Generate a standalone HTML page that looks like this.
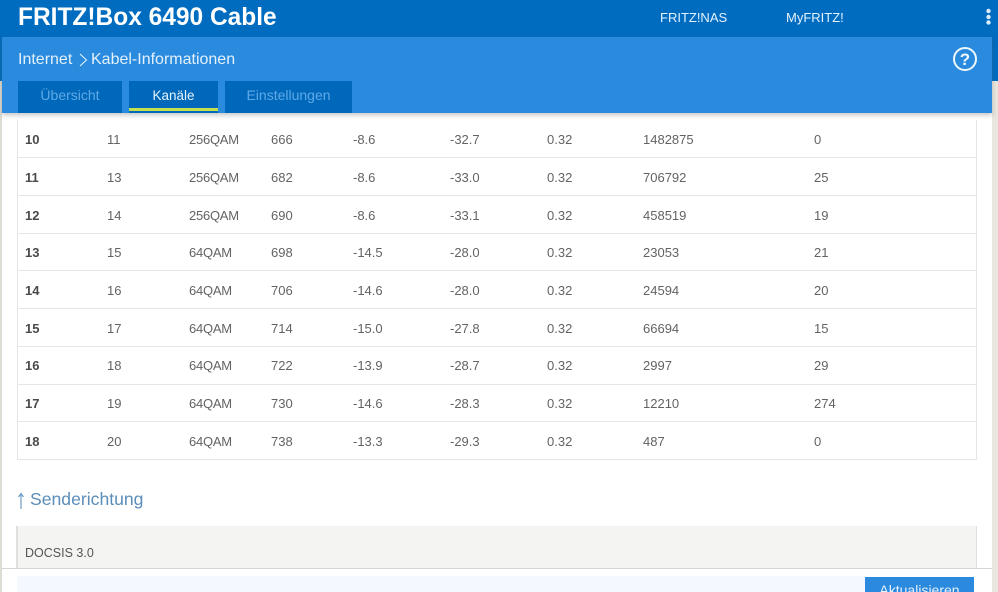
<!DOCTYPE html>
<html><head><meta charset="utf-8">
<style>
html,body{margin:0;padding:0}
body{width:998px;height:592px;position:relative;overflow:hidden;background:#fff;font-family:"Liberation Sans",sans-serif;color:#555}
.a{position:absolute;white-space:nowrap}
.c{font-size:13px;line-height:16px;color:#636363}
.q{letter-spacing:-.25px}
.b{font-weight:bold;color:#4a4a4a}
.l{position:absolute;left:17px;width:960px;height:1px;background:#e6e6e6}
</style></head><body>
<div class="a" style="left:0;top:81px;width:2px;height:511px;background:#dcdcd2"></div>
<div class="a" style="left:992px;top:81px;width:6px;height:511px;background:#e8e6df"></div>

<div class="a" style="left:17px;top:120px;width:1px;height:340px;background:#e6e6e6"></div>
<div class="a" style="left:976px;top:120px;width:1px;height:340px;background:#e6e6e6"></div>
<div class="l" style="top:157px"></div>
<div class="l" style="top:195px"></div>
<div class="l" style="top:233px"></div>
<div class="l" style="top:270px"></div>
<div class="l" style="top:308px"></div>
<div class="l" style="top:346px"></div>
<div class="l" style="top:384px"></div>
<div class="l" style="top:421px"></div>
<div class="l" style="top:459px"></div>

<div class="a c b" style="left:25px;top:132px">10</div><div class="a c" style="left:107px;top:132px">11</div><div class="a c q" style="left:189px;top:132px">256QAM</div><div class="a c" style="left:271px;top:132px">666</div><div class="a c" style="left:353px;top:132px">-8.6</div><div class="a c" style="left:450px;top:132px">-32.7</div><div class="a c" style="left:547px;top:132px">0.32</div><div class="a c" style="left:643px;top:132px">1482875</div><div class="a c" style="left:814px;top:132px">0</div>
<div class="a c b" style="left:25px;top:170px">11</div><div class="a c" style="left:107px;top:170px">13</div><div class="a c q" style="left:189px;top:170px">256QAM</div><div class="a c" style="left:271px;top:170px">682</div><div class="a c" style="left:353px;top:170px">-8.6</div><div class="a c" style="left:450px;top:170px">-33.0</div><div class="a c" style="left:547px;top:170px">0.32</div><div class="a c" style="left:643px;top:170px">706792</div><div class="a c" style="left:814px;top:170px">25</div>
<div class="a c b" style="left:25px;top:208px">12</div><div class="a c" style="left:107px;top:208px">14</div><div class="a c q" style="left:189px;top:208px">256QAM</div><div class="a c" style="left:271px;top:208px">690</div><div class="a c" style="left:353px;top:208px">-8.6</div><div class="a c" style="left:450px;top:208px">-33.1</div><div class="a c" style="left:547px;top:208px">0.32</div><div class="a c" style="left:643px;top:208px">458519</div><div class="a c" style="left:814px;top:208px">19</div>
<div class="a c b" style="left:25px;top:245px">13</div><div class="a c" style="left:107px;top:245px">15</div><div class="a c q" style="left:189px;top:245px">64QAM</div><div class="a c" style="left:271px;top:245px">698</div><div class="a c" style="left:353px;top:245px">-14.5</div><div class="a c" style="left:450px;top:245px">-28.0</div><div class="a c" style="left:547px;top:245px">0.32</div><div class="a c" style="left:643px;top:245px">23053</div><div class="a c" style="left:814px;top:245px">21</div>
<div class="a c b" style="left:25px;top:283px">14</div><div class="a c" style="left:107px;top:283px">16</div><div class="a c q" style="left:189px;top:283px">64QAM</div><div class="a c" style="left:271px;top:283px">706</div><div class="a c" style="left:353px;top:283px">-14.6</div><div class="a c" style="left:450px;top:283px">-28.0</div><div class="a c" style="left:547px;top:283px">0.32</div><div class="a c" style="left:643px;top:283px">24594</div><div class="a c" style="left:814px;top:283px">20</div>
<div class="a c b" style="left:25px;top:321px">15</div><div class="a c" style="left:107px;top:321px">17</div><div class="a c q" style="left:189px;top:321px">64QAM</div><div class="a c" style="left:271px;top:321px">714</div><div class="a c" style="left:353px;top:321px">-15.0</div><div class="a c" style="left:450px;top:321px">-27.8</div><div class="a c" style="left:547px;top:321px">0.32</div><div class="a c" style="left:643px;top:321px">66694</div><div class="a c" style="left:814px;top:321px">15</div>
<div class="a c b" style="left:25px;top:358px">16</div><div class="a c" style="left:107px;top:358px">18</div><div class="a c q" style="left:189px;top:358px">64QAM</div><div class="a c" style="left:271px;top:358px">722</div><div class="a c" style="left:353px;top:358px">-13.9</div><div class="a c" style="left:450px;top:358px">-28.7</div><div class="a c" style="left:547px;top:358px">0.32</div><div class="a c" style="left:643px;top:358px">2997</div><div class="a c" style="left:814px;top:358px">29</div>
<div class="a c b" style="left:25px;top:396px">17</div><div class="a c" style="left:107px;top:396px">19</div><div class="a c q" style="left:189px;top:396px">64QAM</div><div class="a c" style="left:271px;top:396px">730</div><div class="a c" style="left:353px;top:396px">-14.6</div><div class="a c" style="left:450px;top:396px">-28.3</div><div class="a c" style="left:547px;top:396px">0.32</div><div class="a c" style="left:643px;top:396px">12210</div><div class="a c" style="left:814px;top:396px">274</div>
<div class="a c b" style="left:25px;top:434px">18</div><div class="a c" style="left:107px;top:434px">20</div><div class="a c q" style="left:189px;top:434px">64QAM</div><div class="a c" style="left:271px;top:434px">738</div><div class="a c" style="left:353px;top:434px">-13.3</div><div class="a c" style="left:450px;top:434px">-29.3</div><div class="a c" style="left:547px;top:434px">0.32</div><div class="a c" style="left:643px;top:434px">487</div><div class="a c" style="left:814px;top:434px">0</div>

<svg class="a" style="left:15px;top:491px" width="12" height="20" viewBox="0 0 12 20"><path d="M6 18V3M3.5 6L6 2.5 8.5 6" fill="none" stroke="#6d9cc4" stroke-width="1.2"/></svg>
<div class="a" style="left:30px;top:487px;font-size:17.6px;line-height:24px;color:#5b8db8">Senderichtung</div>

<div class="a" style="left:16px;top:526px;width:961px;height:43px;background:#f4f4f2;border-left:2px solid #e0e0dc;border-right:1px solid #e0e0dc;box-sizing:border-box"></div>
<div class="a" style="left:25px;top:545px;font-size:12.5px;line-height:16px;color:#555">DOCSIS 3.0</div>

<div class="a" style="left:2px;top:568px;width:990px;height:24px;background:#fff;border-top:1px solid #d6d6d2;box-sizing:border-box"></div>
<div class="a" style="left:17px;top:576px;width:848px;height:16px;background:#f3f9fe"></div>
<div class="a" style="left:865px;top:577px;width:109px;height:15px;background:#2b8ade;overflow:hidden;text-align:center;color:#e6f2fc;font-size:14px;line-height:26px">Aktualisieren</div>

<div class="a" style="left:0;top:0;width:998px;height:81px;background:#006cc0"></div>
<div class="a" style="left:18px;top:1px;font-size:25px;line-height:32px;font-weight:bold;color:#fff;transform:scaleX(.98);transform-origin:0 0">FRITZ!Box 6490 Cable</div>
<div class="a" style="left:660px;top:10px;font-size:13px;line-height:16px;color:#e3f3fd">FRITZ!NAS</div>
<div class="a" style="left:786px;top:10px;font-size:13px;line-height:16px;color:#e3f3fd">MyFRITZ!</div>
<svg class="a" style="left:984px;top:7px" width="9" height="20" viewBox="0 0 9 20"><circle cx="4.5" cy="4" r="2.2" fill="#dceefa"/><circle cx="4.5" cy="10" r="2.2" fill="#dceefa"/><circle cx="4.5" cy="15.5" r="2.2" fill="#dceefa"/></svg>

<div class="a" style="left:2px;top:37px;width:990px;height:76px;background:#2a8ade;box-shadow:0 2px 5px rgba(80,80,80,.35)"></div>
<div class="a" style="left:18px;top:51px;font-size:16px;line-height:18px;color:#e3f1fb">Internet</div>
<svg class="a" style="left:78px;top:52px" width="11" height="16" viewBox="0 0 11 16"><path d="M2 2l6.5 6L2 14" fill="none" stroke="#e3f1fb" stroke-width="1.1"/></svg>
<div class="a" style="left:91px;top:51px;font-size:16px;line-height:18px;color:#e3f1fb">Kabel-Informationen</div>
<svg class="a" style="left:952px;top:46px" width="26" height="26" viewBox="0 0 26 26"><circle cx="13" cy="13" r="11" fill="none" stroke="#eef7fd" stroke-width="2"/><text x="13" y="19" text-anchor="middle" font-family="Liberation Sans" font-weight="bold" font-size="17" fill="#eef7fd">?</text></svg>

<div class="a" style="left:18px;top:81px;width:104px;height:32px;background:#0068bb;color:#5fa9e6;font-size:14px;line-height:29px;text-align:center">Übersicht</div>
<div class="a" style="left:129px;top:81px;width:89px;height:32px;background:#0068bb;color:#e6f3fc;font-size:13.5px;line-height:29px;text-align:center">Kanäle</div>
<div class="a" style="left:129px;top:108px;width:89px;height:3px;background:#c5e04e"></div>
<div class="a" style="left:225px;top:81px;width:127px;height:32px;background:#0068bb;color:#5fa9e6;font-size:14px;line-height:29px;text-align:center">Einstellungen</div>
</body></html>
